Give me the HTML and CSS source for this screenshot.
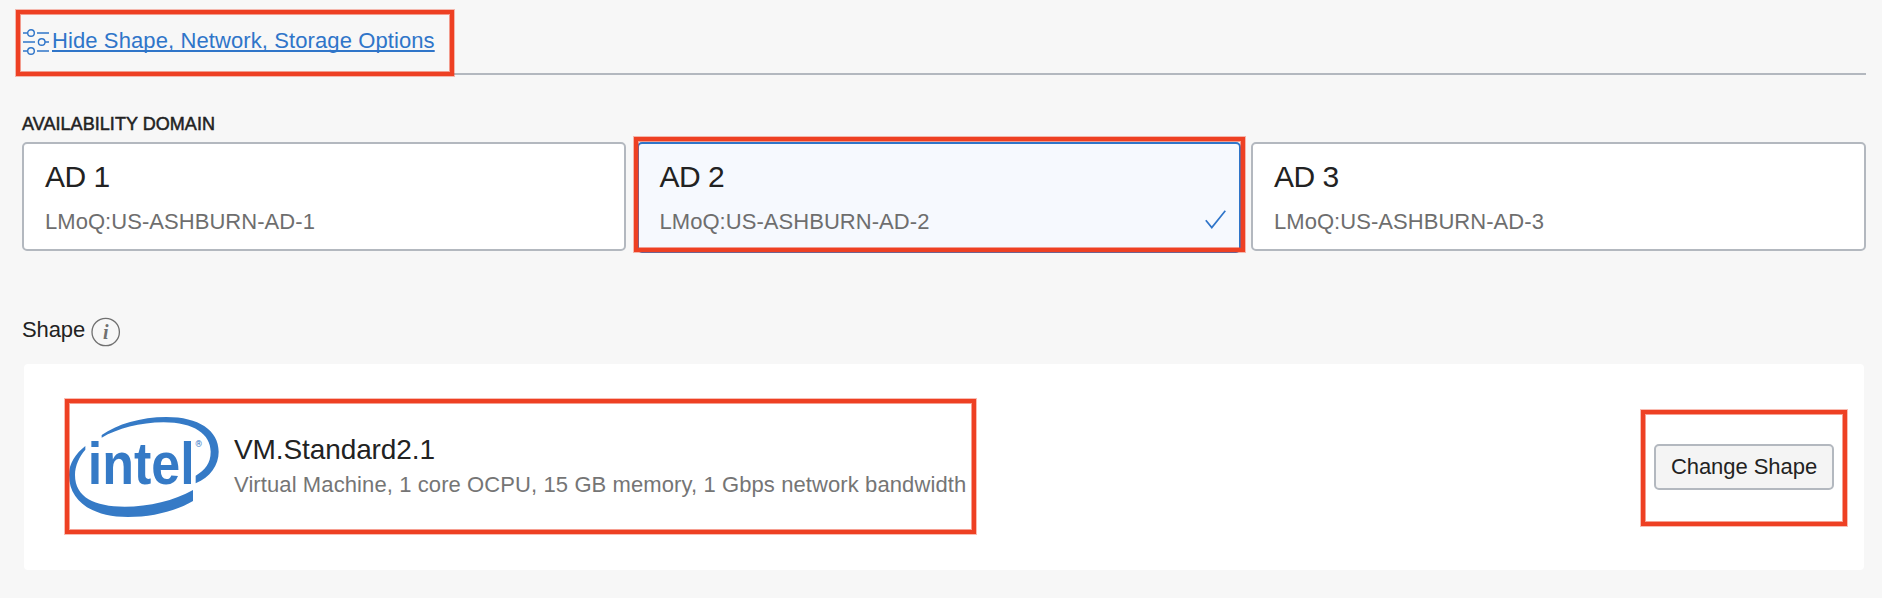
FILE: index.html
```html
<!DOCTYPE html>
<html lang="en">
<head>
<meta charset="utf-8">
<title>Create Compute Instance</title>
<link rel="stylesheet" href="styles.css">
</head>
<body>
<main class="page">
  <header class="options">
    <svg class="options-icon" viewBox="0 0 26 26" width="26" height="26">
      <path d="M0 4h4.500M14 4h12M0 13h12M22 13h4M0 22h4.500M14 22h12"/>
      <circle cx="8" cy="4" r="3.300"/><circle cx="18.700" cy="13" r="3.300"/><circle cx="8" cy="22" r="3.300"/>
    </svg>
    <a class="options-link" href="#">Hide Shape, Network, Storage Options</a>
  </header>

  <h2 class="label-caps">AVAILABILITY DOMAIN</h2>
  <section class="domains">
    <div class="card">
      <div class="card-title">AD 1</div>
      <div class="card-sub">LMoQ:US-ASHBURN-AD-1</div>
    </div>
    <div class="card selected">
      <div class="card-title">AD 2</div>
      <div class="card-sub">LMoQ:US-ASHBURN-AD-2</div>
      <svg class="check" viewBox="0 0 21 19" width="21" height="19"><path d="M.8 10.200 6.800 17.600 20.300.8"/></svg>
    </div>
    <div class="card">
      <div class="card-title">AD 3</div>
      <div class="card-sub">LMoQ:US-ASHBURN-AD-3</div>
    </div>
  </section>

  <div class="shape-label">
    <span>Shape</span>
    <svg class="info" viewBox="0 0 30 30" width="30" height="30">
      <circle cx="14.700" cy="15" r="13.700"/>
      <text x="14.700" y="21.500" text-anchor="middle">i</text>
    </svg>
  </div>

  <section class="panel">
    <svg class="logo" viewBox="208 351 450 300" width="150" height="100">
      <path d="M306 405C352 373 423 351 500 351C597 351 657 391 657 455C657 496 632 531 588 550V527C616 510 633 490 633 455C633 403 583 367 492 367C421 367 353 386 306 413Z"/>
      <path d="M257 438C228 461 208 490 208 525C208 604 278 651 385 651C459 651 529 633 580 603V570C524 602 449 620 375 620C285 620 226 592 226 525C226 496 240 468 257 449Z"/>
      <text class="logo-word" x="264" y="551" textLength="321" lengthAdjust="spacingAndGlyphs">intel</text>
      <text class="logo-mark" x="587" y="440">®</text>
    </svg>
    <div class="shape-info">
      <div class="shape-name">VM.Standard2.1</div>
      <div class="shape-desc">Virtual Machine, 1 core OCPU, 15 GB memory, 1 Gbps network bandwidth</div>
    </div>
    <button class="change">Change Shape</button>
  </section>

  <div class="mark mark-options"></div>
  <div class="mark mark-domain"></div>
  <div class="mark mark-shape"></div>
  <div class="mark mark-change"></div>
</main>
</body>
</html>
```
FILE: styles.css
```css
* { box-sizing: border-box; }
body {
  margin: 0;
  background: #f7f7f7;
  color: #222;
  font: 22px/26px "Liberation Sans", Arial, sans-serif;
}
.page { position: relative; height: 598px; padding: 0 16px 0 22px; overflow: hidden; }

.options { display: flex; height: 75px; padding: 29px 0 0 1px; gap: 3px; border-bottom: 2px solid #b3b8bf; }
.options-icon { fill: none; stroke: #2f75c9; stroke-width: 1.4; }
.options-link {
  height: 26px;
  margin-top: -1px;
  color: #2f75c9;
  letter-spacing: .1px;
  text-decoration: underline;
  text-decoration-thickness: 1.5px;
  text-underline-offset: 2px;
  text-decoration-skip-ink: none;
}

.label-caps {
  margin: 36px 0 0;
  height: 31px;
  font-size: 18px;
  font-weight: 400;
  line-height: 26px;
  letter-spacing: .05px;
  -webkit-text-stroke: .5px #222;
}
.domains { display: grid; grid-template-columns: 604px 604px 615px; column-gap: 10.5px; }
.card {
  position: relative;
  height: 109px;
  padding: 15px 21px;
  border: 2px solid #b3b8bf;
  border-radius: 5px;
  background: #fff;
}
.card.selected { height: 111px; border-color: #2f75c9; background: #f6f9fe; }
.card-title { height: 36px; font-size: 30px; line-height: 36px; letter-spacing: -.5px; }
.card-sub { margin-top: 14px; line-height: 26px; letter-spacing: .05px; color: #6e6e6e; }
.check { position: absolute; right: 13px; top: 66px; fill: none; stroke: #2f75c9; stroke-width: 1.7; }

.shape-label { display: flex; height: 30px; margin-top: 64px; gap: 6px; }
.shape-label span { letter-spacing: -.1px; }
.info circle { fill: none; stroke: #707070; stroke-width: 1.3; }
.info text { fill: #707070; font: italic bold 20px "Liberation Serif", serif; }

.panel {
  display: flex;
  height: 206px;
  margin: 17px 2px 0;
  padding: 53px 30px 0 45px;
  border-radius: 4px;
  background: #fff;
}
.logo { overflow: visible; fill: #357ac6; }
.logo-word { font: bold 177px "Liberation Sans", Arial, sans-serif; }
.logo-mark { font: 26px Roboto, sans-serif; }
.shape-info { margin: 15px auto 0 15px; }
.shape-name { font-size: 28px; line-height: 36px; letter-spacing: -.1px; }
.shape-desc { margin-top: 4px; letter-spacing: .1px; color: #757575; }
.change {
  width: 180px;
  height: 46px;
  margin-top: 27px;
  padding: 0;
  border: 2px solid #b3b8bf;
  border-radius: 5px;
  background: #f4f4f4;
  color: #222;
  font: 22px/26px "Liberation Sans", Arial, sans-serif;
  letter-spacing: -.05px;
}

.mark {
  position: absolute;
  border: 4px solid #ee4023;
  box-shadow: 0 0 0 1px rgba(238, 64, 35, .35), inset 0 0 0 1px rgba(238, 64, 35, .5);
}
.mark-options { left: 16px; top: 10px; width: 438px; height: 66px; }
.mark-domain { left: 634px; top: 137px; width: 611px; height: 115px; }
.mark-shape { left: 65px; top: 399px; width: 911px; height: 135px; }
.mark-change { left: 1641px; top: 410px; width: 206px; height: 116px; }
```
